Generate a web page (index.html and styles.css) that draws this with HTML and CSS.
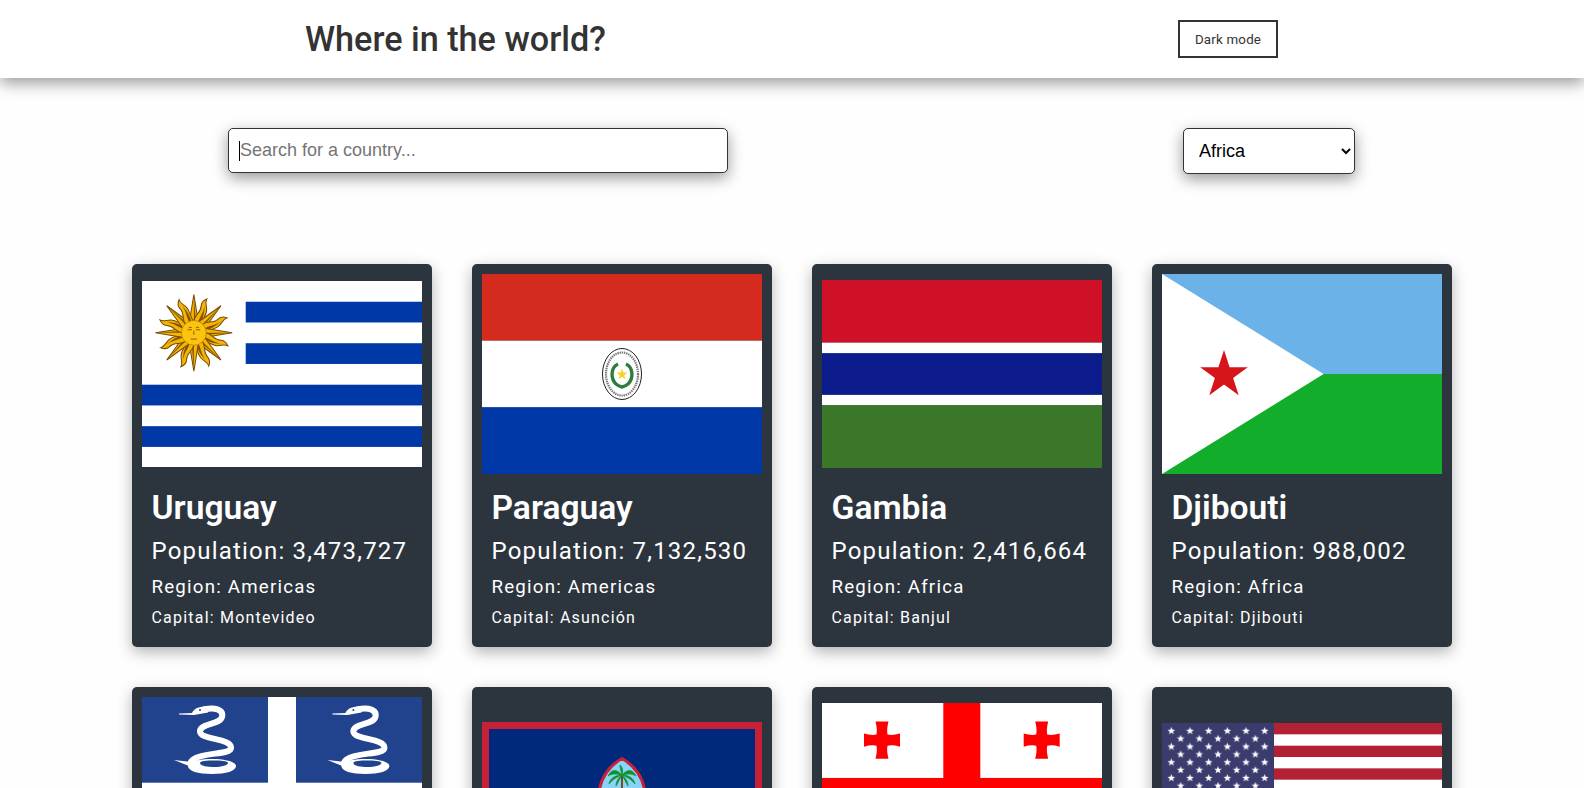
FILE: index.html
```html
<!DOCTYPE html>
<html lang="en">
<head>
<meta charset="utf-8">
<title>Where in the world?</title>
<link rel="stylesheet" href="styles.css">
</head>
<body>
<header class="topbar">
  <h1 class="brand">Where in the world?</h1>
  <button class="mode-btn" type="button">Dark mode</button>
</header>
<section class="filters">
  <div class="search-wrap">
    <input class="search" type="text" placeholder="Search for a country...">
    <span class="caret"></span>
  </div>
  <select class="region">
    <option>Africa</option>
    <option>Americas</option>
    <option>Asia</option>
    <option>Europe</option>
    <option>Oceania</option>
  </select>
</section>
<main class="grid">
  <article class="card">
    <div class="flag-box">
      <svg class="flag" width="280" height="186.67" viewBox="0 0 270 180">
        <defs>
          <g id="ray-straight">
            <path d="M-4.4 -10 L0 -37 L4.4 -10 Z" fill="#f2b705" stroke="#7b4a00" stroke-width="1"/>
            <path d="M0 -10 L0 -36 L2 -10 Z" fill="#8a5200"/>
          </g>
          <g id="ray-wavy">
            <path d="M-4.2 -10 C-6.5 -17 -0.5 -20 -3.5 -27 C-4.5 -30 -3 -33 -1 -35 C-1.5 -31 1.5 -29 3 -25 C5 -19 2 -15 4.2 -10 Z" fill="#f2b705" stroke="#7b4a00" stroke-width="1"/>
            <path d="M0 -10 C-1 -17 1.5 -21 -.5 -28 C1.5 -24 3 -18 2 -10 Z" fill="#8a5200"/>
          </g>
        </defs>
        <rect width="270" height="180" fill="#fff"/>
        <g fill="#0038a8">
          <rect x="100" y="20" width="170" height="20"/>
          <rect x="100" y="60" width="170" height="20"/>
          <rect y="100" width="270" height="20"/>
          <rect y="140" width="270" height="20"/>
        </g>
        <g transform="translate(50 50)">
          <use href="#ray-straight"/>
          <use href="#ray-wavy" transform="rotate(22.5)"/>
          <use href="#ray-straight" transform="rotate(45)"/>
          <use href="#ray-wavy" transform="rotate(67.5)"/>
          <use href="#ray-straight" transform="rotate(90)"/>
          <use href="#ray-wavy" transform="rotate(112.5)"/>
          <use href="#ray-straight" transform="rotate(135)"/>
          <use href="#ray-wavy" transform="rotate(157.5)"/>
          <use href="#ray-straight" transform="rotate(180)"/>
          <use href="#ray-wavy" transform="rotate(202.5)"/>
          <use href="#ray-straight" transform="rotate(225)"/>
          <use href="#ray-wavy" transform="rotate(247.5)"/>
          <use href="#ray-straight" transform="rotate(270)"/>
          <use href="#ray-wavy" transform="rotate(292.5)"/>
          <use href="#ray-straight" transform="rotate(315)"/>
          <use href="#ray-wavy" transform="rotate(337.5)"/>
          <circle r="12" fill="#fcc40f" stroke="#a87400" stroke-width=".6"/>
          <path d="M-6 -3 H-2 M2 -3 H6 M0 -2 V2 M-3 6 H3 M-5 -5 Q-4 -6 -2 -5 M2 -5 Q4 -6 5 -5" fill="none" stroke="#7b4a00" stroke-width=".8"/>
        </g>
      </svg>
    </div>
    <div class="info">
      <h2 class="name">Uruguay</h2>
      <p class="population">Population: 3,473,727</p>
      <p class="area">Region: Americas</p>
      <p class="capital">Capital: Montevideo</p>
    </div>
  </article>
  <article class="card">
    <div class="flag-box">
      <svg class="flag" width="280" height="200" viewBox="0 0 280 200">
        <rect width="280" height="66.7" fill="#d52b1e"/>
        <rect y="66.7" width="280" height="66.7" fill="#fff"/>
        <rect y="133.3" width="280" height="66.7" fill="#0038a8"/>
        <ellipse cx="140" cy="100" rx="19.5" ry="25.5" fill="#fff" stroke="#222" stroke-width="1"/>
        <ellipse cx="140" cy="100" rx="16" ry="21.5" fill="none" stroke="#777" stroke-width="2.2" stroke-dasharray="1.4 .8"/>
        <path d="M144 90 C151 93 152 104 146 110 C143 112.5 141 112.5 140 113 C139 112.5 137 112.5 134 110 C128 104 129 93 136 90" fill="none" stroke="#2f7d3e" stroke-width="3.4"/>
        <path d="M140 94.5 L141.4 98.6 L145.7 98.6 L142.2 101.2 L143.5 105.3 L140 102.8 L136.5 105.3 L137.8 101.2 L134.3 98.6 L138.6 98.6 Z" fill="#f5d327"/>
      </svg>
    </div>
    <div class="info">
      <h2 class="name">Paraguay</h2>
      <p class="population">Population: 7,132,530</p>
      <p class="area">Region: Americas</p>
      <p class="capital">Capital: Asunción</p>
    </div>
  </article>
  <article class="card">
    <div class="flag-box">
      <svg class="flag" width="280" height="188" viewBox="0 0 270 180" preserveAspectRatio="none">
        <rect width="270" height="60" fill="#ce1126"/>
        <rect y="60" width="270" height="60" fill="#fff"/>
        <rect y="70" width="270" height="40" fill="#0c1c8c"/>
        <rect y="120" width="270" height="60" fill="#3a7728"/>
      </svg>
    </div>
    <div class="info">
      <h2 class="name">Gambia</h2>
      <p class="population">Population: 2,416,664</p>
      <p class="area">Region: Africa</p>
      <p class="capital">Capital: Banjul</p>
    </div>
  </article>
  <article class="card">
    <div class="flag-box">
      <svg class="flag" width="280" height="200" viewBox="0 0 280 200">
        <rect width="280" height="100" fill="#6ab2e7"/>
        <rect y="100" width="280" height="100" fill="#12ad2b"/>
        <path d="M0 0 L161.6 100 L0 200 Z" fill="#fff"/>
        <path d="M62 76 L67.6 93.3 L85.8 93.3 L71.1 104 L76.7 121.3 L62 110.6 L47.3 121.3 L52.9 104 L38.2 93.3 L56.4 93.3 Z" fill="#d7141a"/>
      </svg>
    </div>
    <div class="info">
      <h2 class="name">Djibouti</h2>
      <p class="population">Population: 988,002</p>
      <p class="area">Region: Africa</p>
      <p class="capital">Capital: Djibouti</p>
    </div>
  </article>
  <article class="card">
    <div class="flag-box">
      <svg class="flag" width="280" height="200" viewBox="0 0 280 200">
        <defs>
          <g id="snake">
            <path d="M62 12.5 C72 10 82 12 80 20 C78 28 57 26 58 35 C59 43 90 41 89 51 C88 58 62 55 52 62 C49 64 48 66 49 68" fill="none" stroke="#fff" stroke-width="6" stroke-linecap="round"/>
            <path fill-rule="evenodd" d="M46 69 C46 64 58 62 70 62 C84 62 94 65 94 69 C94 74 84 77 70 77 C56 77 46 74 46 69 Z M58 66 C58 69 66 70 72 70 C80 70 86 68 86 66 C86 64 78 63.5 72 63.5 C65 63.5 58 64 58 66 Z" fill="#fff"/>
            <path d="M37 16.5 L50 16 C52 11 58 9 66 9.5 L66 15.5 L52 18 L37 17.6 Z" fill="#fff"/>
            <circle cx="58" cy="13" r="1" fill="#21428d"/>
            <path d="M32 63 L50 65 L52 71 Z" fill="#fff"/>
          </g>
        </defs>
        <rect width="280" height="200" fill="#21428d"/>
        <rect x="126" width="28" height="200" fill="#fff"/>
        <rect y="85.7" width="280" height="28.6" fill="#fff"/>
        <use href="#snake"/>
        <use href="#snake" x="153.4"/>
      </svg>
    </div>
  </article>
  <article class="card">
    <div class="flag-box">
      <svg class="flag" width="280" height="150" viewBox="0 0 280 150">
        <rect width="280" height="150" fill="#c62139"/>
        <rect x="7" y="7" width="266" height="136" fill="#00297b"/>
        <path d="M140 36.5 C152 43 162 56 163 72 C164 94 152 108 140 114 C128 108 116 94 117 72 C118 56 128 43 140 36.5 Z" fill="#8ad3f8" stroke="#c62139" stroke-width="3"/>
        <path d="M139 52 L141 52 L141 90 L139 90 Z" fill="#7a4a1c"/>
        <path d="M140 53 C134 47 130 47 126 54 C131 51 135 52 140 53 C134 53 128 56 127 62 C131 57 135 55 140 53 C136 56 134 60 134 64 C136 60 138 57 140 53 C142 57 144 60 146 64 C146 60 144 56 140 53 C145 55 149 57 153 62 C152 56 146 53 140 53 C145 52 149 51 154 54 C150 47 146 47 140 53 C139 49 138 46 138 43 C141 46 141 49 140 53 Z" fill="#12922e" stroke="#12922e" stroke-width=".8"/>
      </svg>
    </div>
  </article>
  <article class="card">
    <div class="flag-box">
      <svg class="flag" width="280" height="187.4" viewBox="0 0 280 186.67" preserveAspectRatio="none">
        <defs>
          <path id="bolnur" d="M-6.5 -18.5 H6.5 Q4.5 -11 5.5 -5.5 Q11 -4.5 18 -6.5 V6.5 Q11 4.5 5.5 5.5 Q4.5 11 6.5 18.5 H-6.5 Q-4.5 11 -5.5 5.5 Q-11 4.5 -18 6.5 V-6.5 Q-11 -4.5 -5.5 -5.5 Q-4.5 -11 -6.5 -18.5 Z" fill="#f00"/>
        </defs>
        <rect width="280" height="186.67" fill="#fff"/>
        <rect x="121.3" width="37" height="186.67" fill="#f00"/>
        <rect y="74.67" width="280" height="37.33" fill="#f00"/>
        <use href="#bolnur" x="60" y="37"/>
        <use href="#bolnur" x="219.7" y="37"/>
        <use href="#bolnur" x="60" y="149.6"/>
        <use href="#bolnur" x="219.7" y="149.6"/>
      </svg>
    </div>
  </article>
  <article class="card">
    <div class="flag-box">
      <svg class="flag" width="280" height="147.4" viewBox="0 0 280 147.4">
        <defs>
          <path id="star" d="M0 -4 L1 -1.3 L3.8 -1.2 L1.6 .5 L2.4 3.2 L0 1.6 L-2.4 3.2 L-1.6 .5 L-3.8 -1.2 L-1 -1.3 Z" fill="#fff"/>
          <pattern id="stars" patternUnits="userSpaceOnUse" width="18.67" height="15.7" x="0" y="0">
            <use href="#star" x="9.33" y="8"/>
            <use href="#star" x="0" y="15.7"/>
            <use href="#star" x="18.67" y="15.7"/>
            <use href="#star" x="0" y="0"/>
            <use href="#star" x="18.67" y="0"/>
          </pattern>
        </defs>
        <rect width="280" height="147.4" fill="#fff"/>
        <g fill="#b22234">
          <rect width="280" height="11.34"/>
          <rect y="22.68" width="280" height="11.34"/>
          <rect y="45.35" width="280" height="11.34"/>
          <rect y="68.03" width="280" height="11.34"/>
          <rect y="90.71" width="280" height="11.34"/>
          <rect y="113.39" width="280" height="11.34"/>
          <rect y="136.06" width="280" height="11.34"/>
        </g>
        <rect width="112" height="79.37" fill="#3c3b6e"/>
        <rect x="5" y="3.5" width="102" height="72.5" fill="url(#stars)"/>
      </svg>
    </div>
  </article>
</main>
</body>
</html>
```

FILE: styles.css
```css
* {
  box-sizing: border-box;
}

html,
body {
  height: 100%;
  overflow: hidden;
}

body {
  margin: 0;
  background: #fefefe;
  font-family: Roboto, "Liberation Sans", sans-serif;
  letter-spacing: 1.2px;
  color: #333;
}

.topbar {
  display: flex;
  align-items: center;
  justify-content: space-between;
  height: 78px;
  padding: 0 306px 0 305px;
  background: #fff;
  box-shadow: 0 5px 15px rgba(0, 0, 0, 0.4);
}

.brand {
  margin: 0;
  font-size: 34.2px;
  font-weight: 500;
  letter-spacing: 0;
  color: #333;
}

.mode-btn {
  width: 100px;
  height: 38px;
  padding: 0;
  border: 2px solid #333;
  background: #fff;
  color: #333;
  font-family: Roboto, "Liberation Sans", sans-serif;
  font-size: 13.33px;
  letter-spacing: 0.2px;
}

.filters {
  display: flex;
  align-items: flex-start;
  justify-content: space-between;
  padding: 50px 229px 90px 228px;
}

.search-wrap {
  position: relative;
}

.search {
  display: block;
  width: 500px;
  height: 45px;
  padding: 0 10px 0 11px;
  border: 1px solid #2c343e;
  border-radius: 5px;
  background: #fff;
  font-family: "Liberation Sans", sans-serif;
  font-size: 18px;
  letter-spacing: 0;
  box-shadow: 0 5px 15px rgba(0, 0, 0, 0.4);
  outline: none;
}

.search::placeholder {
  color: #757575;
}

.caret {
  position: absolute;
  left: 11px;
  top: 13px;
  width: 1px;
  height: 20px;
  background: #000;
}

.region {
  width: 172px;
  height: 46px;
  padding: 0 10px 0 11px;
  border: 1px solid #2c343e;
  border-radius: 5px;
  background: #fff;
  color: #000;
  font-family: "Liberation Sans", sans-serif;
  font-size: 18px;
  letter-spacing: 0;
  box-shadow: 0 5px 15px rgba(0, 0, 0, 0.4);
}

.grid {
  display: grid;
  grid-template-columns: repeat(4, 300px);
  grid-auto-rows: 383px;
  justify-content: center;
  gap: 40px;
}

.card {
  padding: 10px;
  border-radius: 5px;
  background: #2c343e;
  color: #fff;
  box-shadow: 0 5px 15px rgba(0, 0, 0, 0.3);
}

.flag-box {
  display: flex;
  align-items: center;
  justify-content: center;
  height: 200px;
}

.flag {
  display: block;
  flex: none;
}

.info {
  padding: 15px 9.5px 0;
}

.name {
  margin: 0;
  font-size: 33.6px;
  font-weight: 600;
  letter-spacing: 0;
  line-height: 38px;
}

.population {
  margin: 10px 0 0;
  font-size: 24px;
  line-height: 28px;
}

.area {
  margin: 11px 0 0;
  font-size: 18.72px;
  line-height: 22px;
}

.capital {
  margin: 10px 0 0;
  font-size: 16px;
  line-height: 19px;
}
```
